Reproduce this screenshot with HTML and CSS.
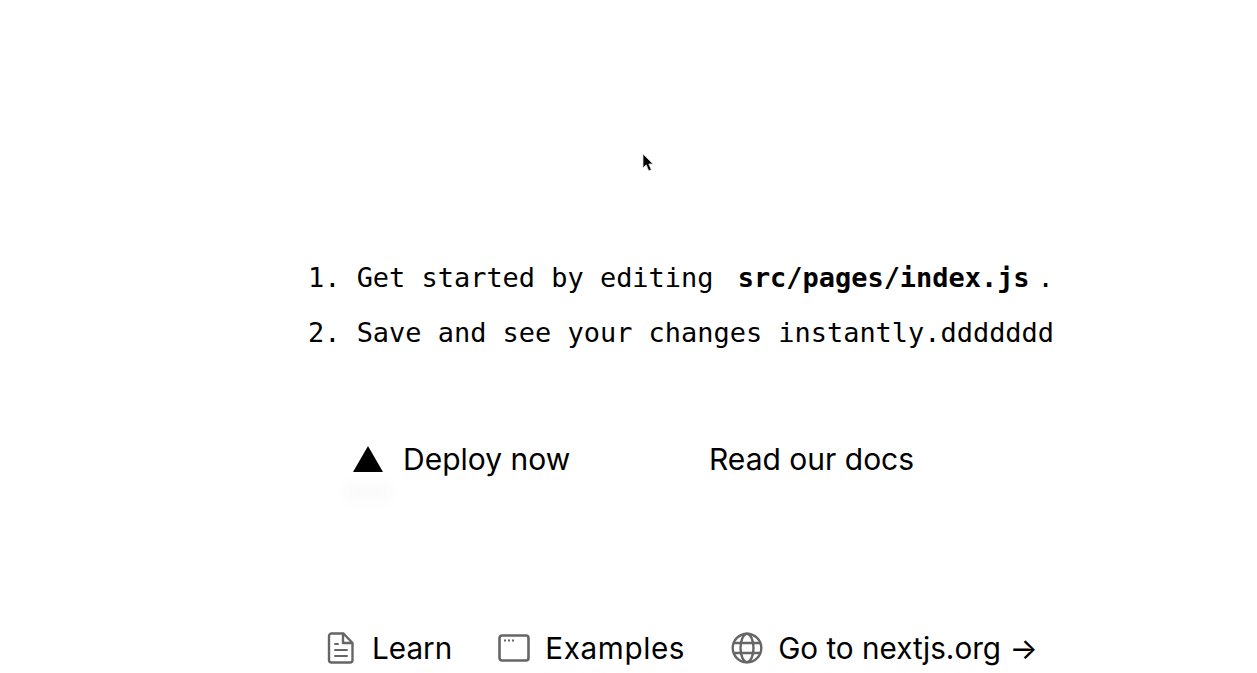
FILE: index.html
```html
<!DOCTYPE html>
<html lang="en">
<head>
    <meta charset="UTF-8">
    <meta name="viewport" content="width=device-width, initial-scale=1.0">
    <title>Create Next App</title>
    <link rel="stylesheet" href="styles.css">
</head>
<body>
    <svg class="cursor" width="12" height="20" viewBox="0 0 12 20" aria-hidden="true">
        <path d="M1 1v14l3.200-3.200 2.500 6 2.600-1.100-2.500-5.700H11z" fill="#000" stroke="#ddd" stroke-width="0.800"/>
    </svg>
    <div class="smudge"></div>

    <main class="page">
        <ol class="steps">
            <li>Get started by editing <code>src/pages/index.js</code>.</li>
            <li>Save and see your changes instantly.ddddddd</li>
        </ol>

        <div class="ctas">
            <a class="cta cta-deploy" href="#">
                <svg class="triangle" width="30" height="26" viewBox="0 0 30 26" aria-hidden="true">
                    <path d="M15 0l15 26H0z" fill="#000"/>
                </svg>
                Deploy now
            </a>
            <a class="cta" href="#">Read our docs</a>
        </div>
    </main>

    <footer class="footer">
        <a class="footer-link" href="#">
            <svg width="30" height="32" viewBox="0 0 30 32" fill="none" stroke="#666" stroke-width="2.400" stroke-linejoin="round" stroke-linecap="round" aria-hidden="true">
                <path d="M4.500 1.500h12l9 9.500v17a2.500 2.500 0 0 1-2.500 2.500H4.500A2.500 2.500 0 0 1 2 28V4a2.500 2.500 0 0 1 2.500-2.500z"/>
                <path d="M16 2v9h9"/>
                <path d="M8 12h3M8 18h12M8 24h12" stroke-width="2"/>
            </svg>
            Learn
        </a>
        <a class="footer-link footer-link-wide" href="#">
            <svg width="32" height="28" viewBox="0 0 32 28" fill="none" stroke="#666" aria-hidden="true">
                <rect x="1.500" y="1.500" width="29" height="25" rx="2.500" stroke-width="2.600"/>
                <path d="M6 6.500h2M10 6.500h2M14 6.500h2" stroke-width="1.800"/>
            </svg>
            Examples
        </a>
        <a class="footer-link" href="#">
            <svg width="32" height="32" viewBox="0 0 32 32" fill="none" stroke="#666" stroke-width="2.400" aria-hidden="true">
                <circle cx="16" cy="16" r="14.300"/>
                <ellipse cx="16" cy="16" rx="6.500" ry="14.300"/>
                <path d="M2.500 11h27M2.500 21h27"/>
            </svg>
            Go to nextjs.org →
        </a>
    </footer>
</body>
</html>
```

FILE: styles.css
```css
* {
    padding: 0;
    margin: 0;
    box-sizing: border-box;
}

html, body {
    height: 673px;
    overflow: hidden;
    background-color: #ffffff;
}

body {
    color: #000000;
    font-family: "Inter", sans-serif;
    display: flex;
    flex-direction: column;
}

a {
    color: inherit;
    text-decoration: none;
}

.cursor {
    position: absolute;
    left: 642px;
    top: 153px;
}

.smudge {
    position: absolute;
    left: 346px;
    top: 481px;
    width: 44px;
    height: 22px;
    background-color: #fbfbfb;
    filter: blur(5px);
}

.page {
    flex: 1;
    display: flex;
    flex-direction: column;
    padding: 250px 0 0 308px;
}

.steps {
    font-family: "DejaVu Sans Mono", monospace;
    font-size: 26.950px;
    line-height: 55px;
    list-style-position: inside;
}

.steps code {
    font-family: inherit;
    font-weight: 700;
    padding: 0 8px;
}

.ctas {
    display: flex;
    margin-top: 79px;
    padding-left: 45px;
}

.cta {
    display: flex;
    align-items: center;
    gap: 20px;
    font-size: 30px;
    line-height: 40px;
}

.cta-deploy {
    width: 356px;
}

.footer {
    display: flex;
    gap: 46px;
    padding: 0 0 5px 327px;
}

.footer-link {
    display: flex;
    align-items: center;
    gap: 15px;
    font-size: 29.700px;
    line-height: 40px;
}

.footer-link-wide {
    letter-spacing: 0.600px;
}
```
